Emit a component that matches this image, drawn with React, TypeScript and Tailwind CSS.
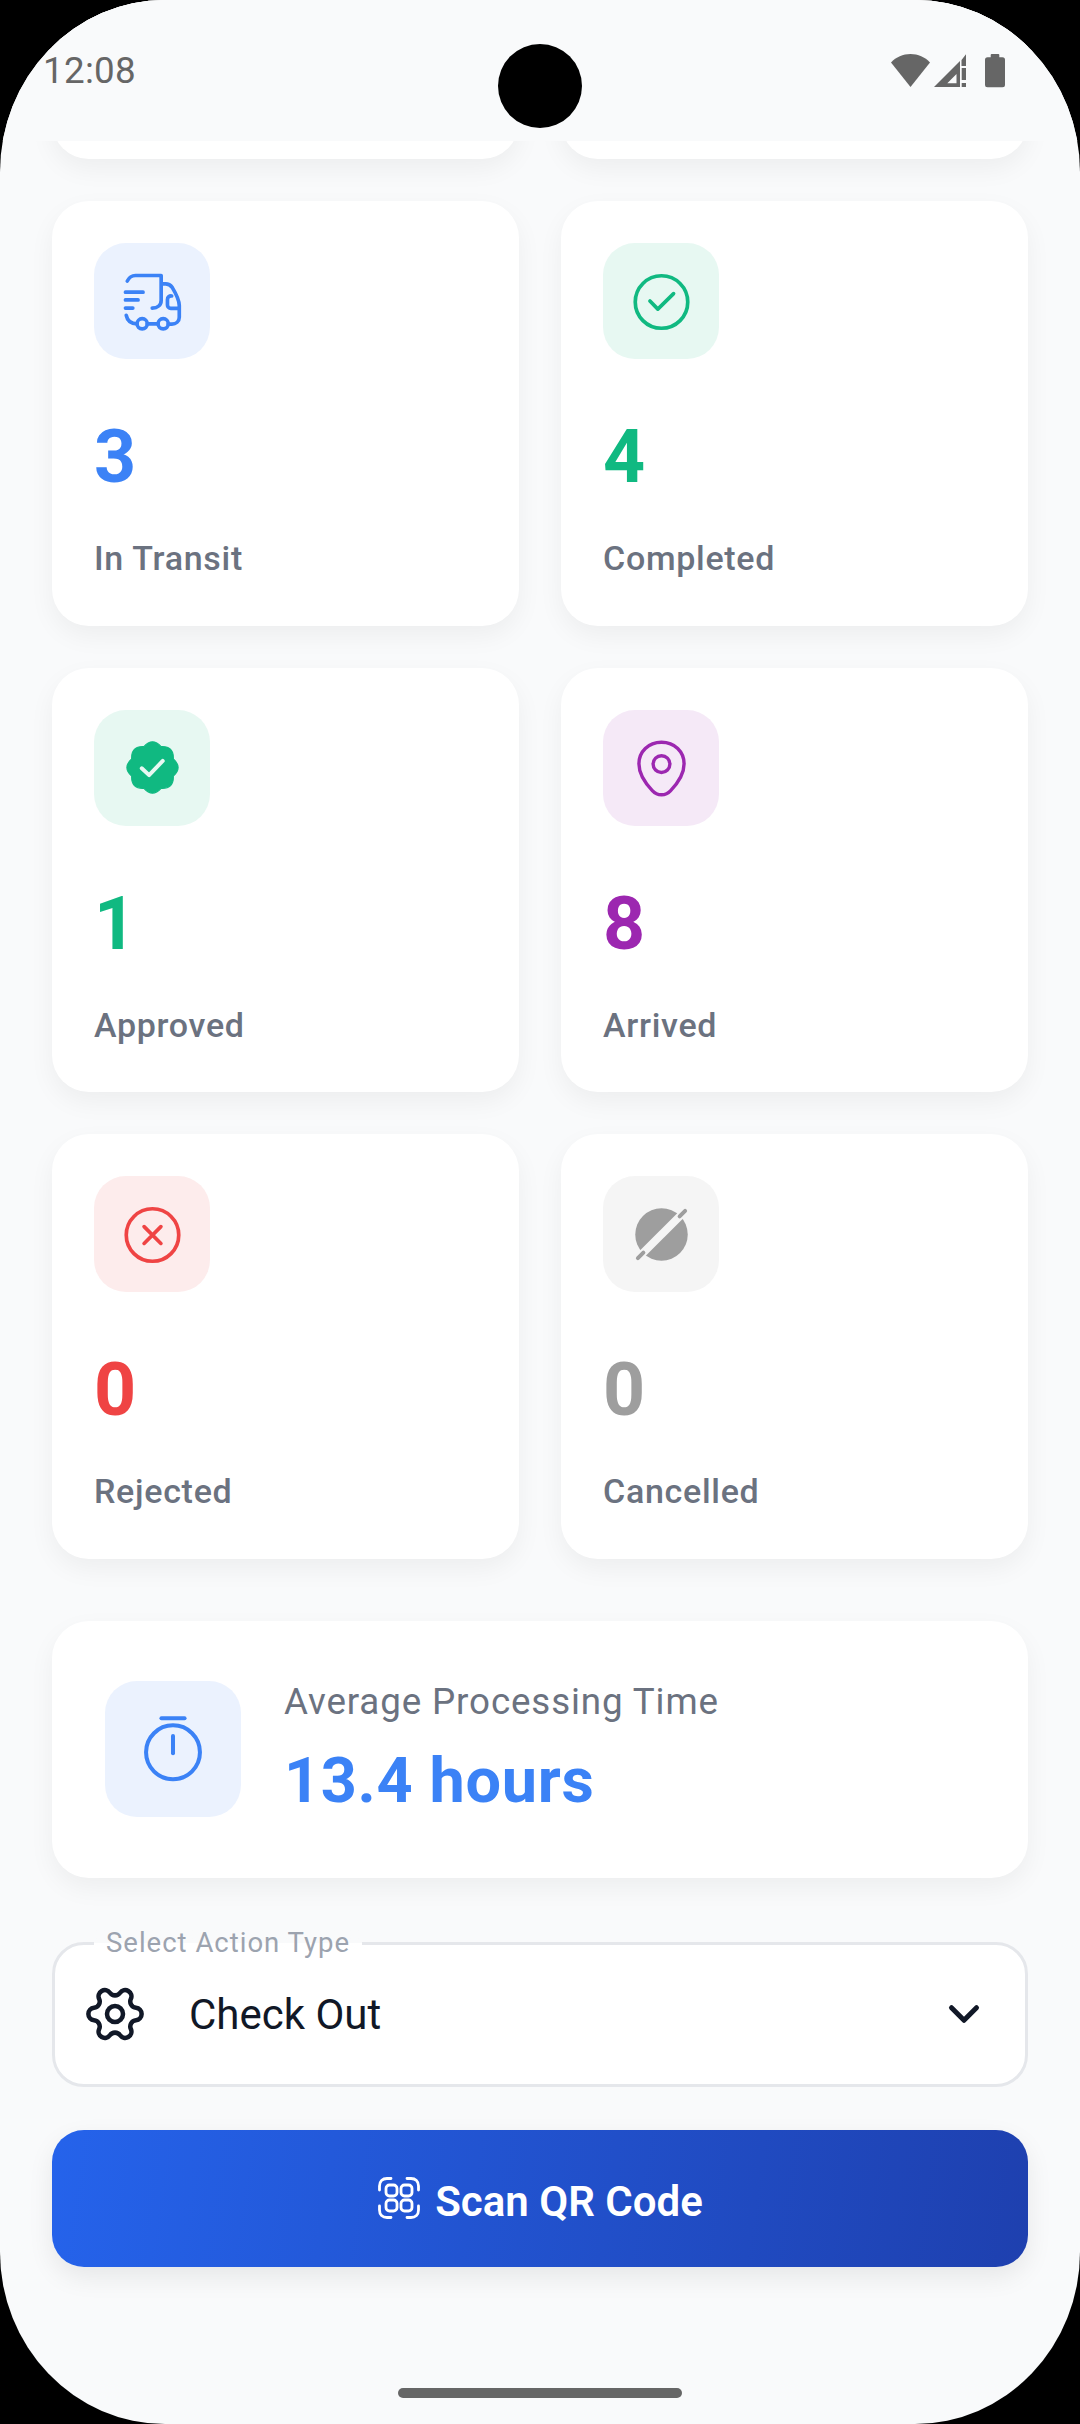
import { ChevronDown, Settings } from "lucide-react";
import type { ReactNode } from "react";

function TruckIcon() {
  return (
    <svg width="63" height="63" viewBox="0 0 24 24" fill="none" stroke="#3b82f6" strokeWidth="1.4" strokeLinecap="round" strokeLinejoin="round">
      <path d="M2.4 4.2C3 3 4 2.1 5.5 2.1H15.3V11.6C15.3 13.3 14 14.5 11.9 14.5" />
      <path d="M15.7 5.3H17C18 5.3 18.9 5.8 19.5 6.6C20.7 8.6 22.2 11.6 22.2 13.5V18C22.2 19.6 20.9 20.6 19.4 20.6H18" />
      <path d="M22 14.6H19C18.2 14.6 17.7 14 17.7 13.3V11.3C17.7 10.3 18.4 9.8 19.3 9.9" />
      <path d="M1.7 8.45H8.4M1.7 11.4H6.5M1.7 14.5H4.5" />
      <path d="M2 17.3C2.4 19.3 3.8 20.5 6.1 20.5M10 20.5H14.1" />
      <circle cx="8.07" cy="20.5" r="1.95" />
      <circle cx="16.07" cy="20.5" r="1.95" />
    </svg>
  );
}

function CheckCircleIcon() {
  return (
    <svg width="63" height="63" viewBox="0 0 24 24" fill="none" stroke="#10b981" strokeWidth="1.4" strokeLinecap="round" strokeLinejoin="round">
      <circle cx="12" cy="12.2" r="10" />
      <path d="M7.6 11.8L10.6 14.9L16.6 9" />
    </svg>
  );
}

function BadgeIcon() {
  return (
    <svg width="63" height="63" viewBox="0 0 24 24" fill="none" strokeLinecap="round" strokeLinejoin="round">
      <path
        fill="#10b981"
        stroke="#10b981"
        strokeWidth="0.4"
        d="M8.71 4.05Q12 0.4 15.29 4.05Q20.2 3.8 19.95 8.71Q23.6 12 19.95 15.29Q20.2 20.2 15.29 19.95Q12 23.6 8.71 19.95Q3.8 20.2 4.05 15.29Q0.4 12 4.05 8.71Q3.8 3.8 8.71 4.05Z"
      />
      <path d="M7.9 12.3L10.7 14.9L15.9 9.5" stroke="#e7f8f2" strokeWidth="1.5" />
    </svg>
  );
}

function PinIcon() {
  return (
    <svg width="63" height="63" viewBox="0 0 24 24" fill="none" stroke="#9c27b0" strokeWidth="1.3">
      <path d="M12 2.4C7 2.4 3.4 6 3.4 10.6C3.4 14.6 6 18.2 8.5 20.8C9.5 21.9 10.6 22.4 12 22.4C13.4 22.4 14.5 21.9 15.5 20.8C18 18.2 20.6 14.6 20.6 10.6C20.6 6 17 2.4 12 2.4Z" />
      <circle cx="12" cy="10.7" r="3.2" />
    </svg>
  );
}

function XCircleIcon() {
  return (
    <svg width="63" height="63" viewBox="0 0 24 24" fill="none" stroke="#ef4444" strokeWidth="1.4" strokeLinecap="round">
      <circle cx="12" cy="12.2" r="10" />
      <path d="M8.8 9L15.2 15.4M15.2 9L8.8 15.4" />
    </svg>
  );
}

function BlockedIcon() {
  return (
    <svg width="63" height="63" viewBox="0 0 24 24" fill="none" strokeLinecap="round">
      <circle cx="12" cy="12" r="10" fill="#9e9e9e" />
      <path d="M3.5 20.5L20.5 3.5" stroke="#f5f5f5" strokeWidth="3" strokeLinecap="butt" />
      <path d="M3 21L5.1 18.9M18.9 5.1L21 3" stroke="#9e9e9e" strokeWidth="1.5" />
    </svg>
  );
}

function TimerIcon() {
  return (
    <svg width="84" height="84" viewBox="0 0 24 24" fill="none" stroke="#3b82f6" strokeWidth="1.15" strokeLinecap="round">
      <path d="M8.7 3.2H15.3" />
      <circle cx="12" cy="12.94" r="7.7" />
      <path d="M12 8.3V13.2" />
    </svg>
  );
}

function QrIcon() {
  return (
    <svg width="44" height="44" viewBox="0 0 44 44" fill="none" stroke="white" strokeWidth="2.8" strokeLinecap="round">
      <path d="M2.5 14V10C2.5 5.5 5.5 2.5 10 2.5H14M30 2.5H34C38.5 2.5 41.5 5.5 41.5 10V14M41.5 30V34C41.5 38.5 38.5 41.5 34 41.5H30M14 41.5H10C5.5 41.5 2.5 38.5 2.5 34V30" />
      <rect x="9" y="9" width="11" height="11" rx="3.5" />
      <rect x="24" y="9" width="11" height="11" rx="3.5" />
      <rect x="9" y="24" width="11" height="11" rx="3.5" />
      <rect x="24" y="24" width="11" height="11" rx="3.5" />
    </svg>
  );
}

function StatusIcons() {
  return (
    <svg width="120" height="40" viewBox="890 50 120 40" className="absolute left-[890px] top-[50px]" fill="#666666">
      <path d="M910.5 87L891 62.5C896 57 903 54 910.5 54C918 54 925 57 930 62.5Z" />
      <path fillRule="evenodd" d="M934 87L960 61V87ZM947.3 83.3H956.5V74Z" />
      <path d="M961.5 60L966 54.3V66H961.5ZM961.7 68H966V80H961.7ZM961.7 83H966V87H961.7Z" />
      <rect x="990.7" y="54" width="8.6" height="5" rx="1" />
      <rect x="985" y="57.3" width="20" height="30" rx="2.5" />
    </svg>
  );
}

function StatCard({ icon, iconBg, value, valueColor, label }: { icon: ReactNode; iconBg: string; value: string; valueColor: string; label: string }) {
  return (
    <div className="h-[424.6px] rounded-[37px] bg-white p-[42px] shadow-[0_10px_26px_rgba(0,0,0,0.05)]">
      <div className={`flex h-[116px] w-[116px] items-center justify-center rounded-[32px] ${iconBg}`}>{icon}</div>
      <div className={`mt-[55px] text-[73.5px] leading-[86px] font-bold ${valueColor}`}>{value}</div>
      <div className="mt-[38px] text-[34px] leading-[40px] font-medium tracking-[0.7px] text-[#6b7280]">{label}</div>
    </div>
  );
}

export default function App() {
  return (
    <div className="h-[2424px] w-[1080px] bg-black font-['Roboto',sans-serif]">
      <div className="relative h-[2424px] w-[1080px] overflow-hidden rounded-[165px/172px] bg-[#f9fafb]">
        <div className="px-[52px]">
          <div className="-mt-[266px] grid grid-cols-2 gap-[42px]">
            <div className="h-[425px] rounded-[37px] bg-white shadow-[0_10px_26px_rgba(0,0,0,0.05)]" />
            <div className="h-[425px] rounded-[37px] bg-white shadow-[0_10px_26px_rgba(0,0,0,0.05)]" />
            <StatCard icon={<TruckIcon />} iconBg="bg-[#ebf2fe]" value="3" valueColor="text-[#3b82f6]" label="In Transit" />
            <StatCard icon={<CheckCircleIcon />} iconBg="bg-[#e7f8f2]" value="4" valueColor="text-[#10b981]" label="Completed" />
            <StatCard icon={<BadgeIcon />} iconBg="bg-[#e7f8f2]" value="1" valueColor="text-[#10b981]" label="Approved" />
            <StatCard icon={<PinIcon />} iconBg="bg-[#f5e9f7]" value="8" valueColor="text-[#9c27b0]" label="Arrived" />
            <StatCard icon={<XCircleIcon />} iconBg="bg-[#fdecec]" value="0" valueColor="text-[#ef4444]" label="Rejected" />
            <StatCard icon={<BlockedIcon />} iconBg="bg-[#f5f5f5]" value="0" valueColor="text-[#9e9e9e]" label="Cancelled" />
          </div>

          <div className="mt-[62px] flex h-[257px] items-center gap-[43px] rounded-[37px] bg-white px-[53px] shadow-[0_10px_26px_rgba(0,0,0,0.05)]">
            <div className="flex h-[136px] w-[136px] items-center justify-center rounded-[32px] bg-[#ebf2fe]">
              <TimerIcon />
            </div>
            <div className="flex flex-col gap-[21px]">
              <div className="text-[36.75px] leading-[43px] tracking-[0.87px] text-[#6b7280]">Average Processing Time</div>
              <div className="text-[63px] leading-[74px] font-bold tracking-[0.65px] text-[#3b82f6]">13.4 hours</div>
            </div>
          </div>

          <div className="relative mt-[64px] flex h-[145px] items-center rounded-[32px] border-[3px] border-[#e5e7eb] bg-white pr-[36px] pl-[28px]">
            <span className="absolute -top-[20px] left-[39px] bg-linear-to-b from-[#f9fafb] from-50% to-white to-50% px-[12px] text-[27.5px] leading-[36px] tracking-[1px] text-[#9ca3af]">
              Select Action Type
            </span>
            <Settings size={64} strokeWidth={1.7} className="rotate-90 text-[#111827]" />
            <span className="ml-[42px] flex-1 pt-[2px] text-[42px] leading-none text-[#111827]">Check Out</span>
            <ChevronDown size={50} strokeWidth={2.4} className="text-[#111827]" />
          </div>

          <button className="mt-[43px] flex h-[137px] w-full items-center justify-center gap-[14px] rounded-[32px] bg-[linear-gradient(98deg,#2563eb,#1e40af)] text-[42px] font-semibold text-white shadow-[0_10px_26px_rgba(0,0,0,0.08)]">
            <QrIcon />
            <span className="pt-[6px]">Scan QR Code</span>
          </button>
        </div>

        <div className="absolute inset-x-0 top-0 h-[141px] bg-[#f9fafb]">
          <span className="absolute top-[49px] left-[43px] text-[36.75px] leading-[43px] tracking-[0.3px] text-[#666666]">12:08</span>
          <div className="absolute top-[44px] left-[498px] h-[84px] w-[84px] rounded-full bg-black" />
          <StatusIcons />
        </div>
        <div className="absolute top-[2388px] left-[398px] h-[10px] w-[284px] rounded-full bg-[#666666]" />
      </div>
    </div>
  );
}
